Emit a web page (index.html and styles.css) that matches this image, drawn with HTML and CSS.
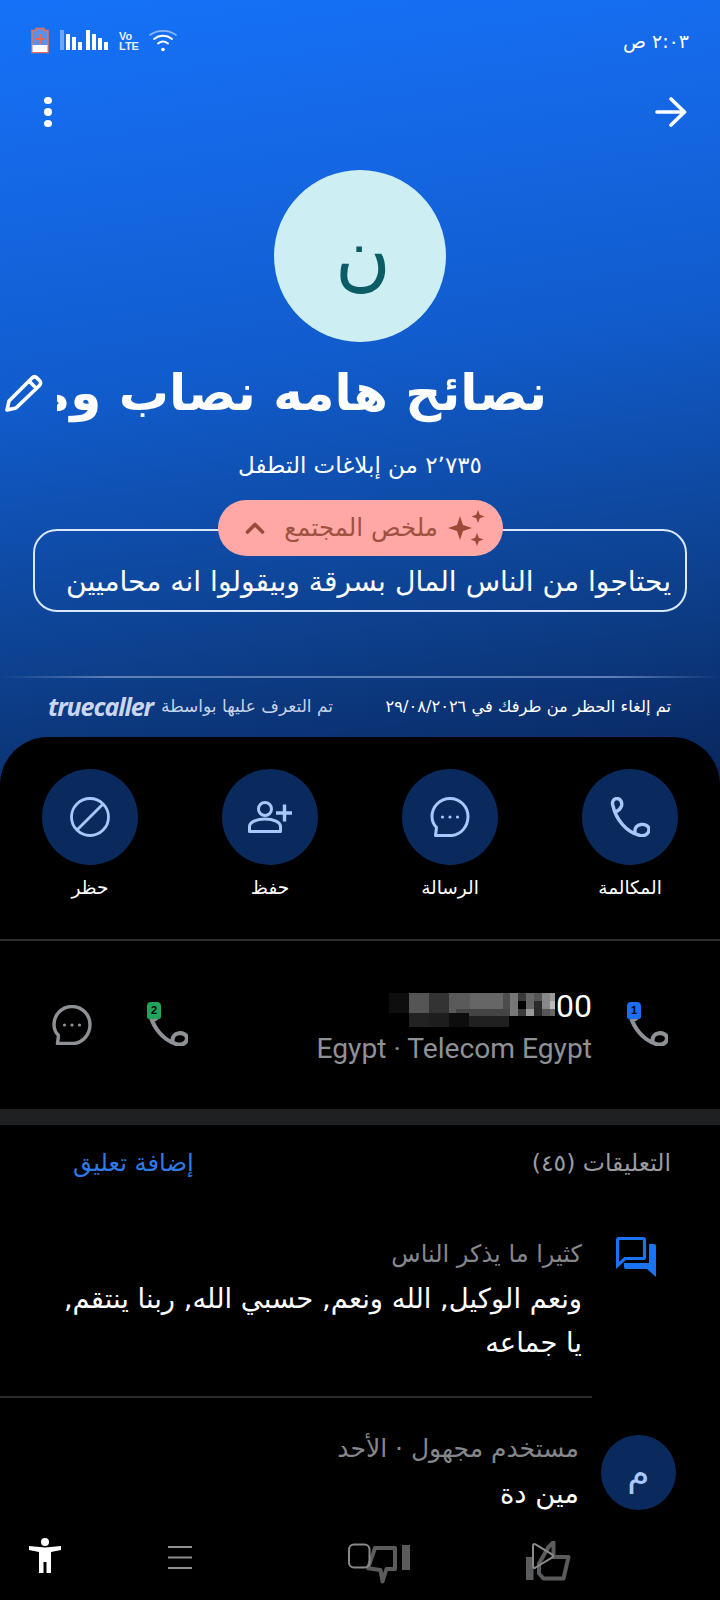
FILE: index.html
```html
<!DOCTYPE html>
<html lang="ar" dir="rtl">
<head>
    <meta charset="UTF-8">
    <meta name="viewport" content="width=device-width, initial-scale=1.0">
    <title>نصائح هامه نصاب</title>
    <link rel="stylesheet" href="styles.css">
</head>
<body>
    <div class="hero">
        <div class="status">
            <span class="time">٢:٠٣ ص</span>
            <div class="status-icons">
                <svg class="battery" width="18" height="27" viewBox="0 0 18 27">
                    <path d="M5 1.5h8v2h4v22H1v-22h4z" fill="#5b8fe8" stroke="#e2725b" stroke-width="1.6"/>
                    <rect x="1.5" y="18" width="15" height="7" fill="#fff"/>
                    <path d="M9 7v10M4.5 12h9" stroke="#f0664a" stroke-width="2"/>
                </svg>
                <svg class="signal" width="48" height="20" viewBox="0 0 48 20">
                    <rect x="0" y="0" width="4" height="20" fill="#6fa6fa"/>
                    <rect x="6" y="4" width="4" height="16" fill="#fff"/>
                    <rect x="12" y="7" width="4" height="13" fill="#fff"/>
                    <rect x="18" y="12" width="4" height="8" fill="#fff"/>
                    <rect x="26" y="0" width="4" height="20" fill="#fff"/>
                    <rect x="32" y="4" width="4" height="16" fill="#fff"/>
                    <rect x="38" y="8" width="4" height="12" fill="#fff"/>
                    <rect x="44" y="12" width="4" height="8" fill="#fff"/>
                </svg>
                <div class="volte"><span>Vo</span><span>LTE</span></div>
                <svg class="wifi" width="28" height="23" viewBox="0 0 28 23" fill="none" stroke-linecap="round">
                    <path d="M1 6C8.500 .5 19.500 .5 27 6" stroke="#8ab6fa" stroke-width="1.6"/>
                    <path d="M5 10c5.500-4.200 12.500-4.200 18 0" stroke="#fff" stroke-width="2"/>
                    <path d="M9 14.500c3-2.400 7-2.400 10 0" stroke="#fff" stroke-width="2"/>
                    <circle cx="14" cy="20.500" r="1.800" fill="#fff"/>
                </svg>
            </div>
        </div>

        <div class="toolbar">
            <svg width="32" height="30" viewBox="0 0 32 30" fill="none" stroke="#fff" stroke-width="3.6" stroke-linecap="round" stroke-linejoin="round">
                <path d="M2 15h27M16 2l13.500 13L16 28"/>
            </svg>
            <div class="dots"><i></i><i></i><i></i></div>
        </div>

        <div class="avatar">ن</div>

        <div class="name-row">
            <h1 class="name">نصائح هامه نصاب ومحتال</h1>
            <svg class="pencil" width="38" height="38" viewBox="0 0 38 38" fill="none" stroke="#fff" stroke-width="3.6" stroke-linejoin="round">
                <path d="M2 36l2-9L27 4c1.500-1.500 3.500-1.500 5 0l2.500 2.500c1.500 1.500 1.500 3.500 0 5L11 34z"/>
                <path d="M24 7l7.500 7.500"/>
            </svg>
        </div>

        <p class="reports">٢٬٧٣٥ من إبلاغات التطفل</p>

        <div class="summary">
            <div class="summary-pill">
                <svg width="38" height="36" viewBox="0 0 38 36" fill="#9c4a38">
                    <path d="M12 6l3 9 9 3-9 3-3 9-3-9-9-3 9-3z"/>
                    <path d="M30 0l1.800 4.700 4.700 1.800-4.700 1.800L30 13l-1.800-4.700-4.700-1.800 4.700-1.800z"/>
                    <path d="M29 23l1.800 4.700 4.700 1.800-4.700 1.800L29 36l-1.800-4.700-4.700-1.800 4.700-1.800z"/>
                </svg>
                <span>ملخص المجتمع</span>
                <svg width="20" height="12" viewBox="0 0 20 12" fill="none" stroke="#9c4a38" stroke-width="3.6" stroke-linecap="round" stroke-linejoin="round">
                    <path d="M2.500 10L10 2.500 17.500 10"/>
                </svg>
            </div>
            <p class="summary-text">يحتاجوا من الناس المال بسرقة وبيقولوا انه محاميين</p>
        </div>

        <div class="hero-line"></div>

        <div class="hero-foot">
            <span class="unblocked">تم إلغاء الحظر من طرفك في ٢٩/٠٨/٢٠٢٦</span>
            <span class="found-by">تم التعرف عليها بواسطة <b class="logo" dir="ltr">truecaller</b></span>
        </div>
    </div>

    <div class="sheet">
        <div class="actions">
            <div class="action">
                <div class="action-icon">
                    <svg width="40" height="40" viewBox="0 0 40 40" fill="none" stroke="#a8c7fa" stroke-width="3.4" stroke-linejoin="round" stroke-linecap="round">
                        <path d="M5.500 15C8 14 10.500 12 11.500 9 12.500 5.500 10.500 1.500 7 1.500 3.500 1.500 1.500 5 3 9 6 22 16 35 30 38.500c5 1 9-2 9-6 0-3.500-4-5.500-8-5-4 .5-6.500 3.500-6 7.500"/>
                    </svg>
                </div>
                <span>المكالمة</span>
            </div>
            <div class="action">
                <div class="action-icon">
                    <svg width="40" height="40" viewBox="0 0 40 40" fill="none" stroke="#a8c7fa" stroke-width="3" stroke-linejoin="round">
                        <path d="M20 1.500C10 1.500 2 9.500 2 19.500c0 4.500 1.500 8 4.500 11L5.500 38.500H22c9-1 16-9 16-19C38 9.500 30 1.500 20 1.500z"/>
                        <circle cx="12.500" cy="20" r="1.600" fill="#a8c7fa" stroke="none"/>
                        <circle cx="20" cy="20" r="1.600" fill="#a8c7fa" stroke="none"/>
                        <circle cx="27.500" cy="20" r="1.600" fill="#a8c7fa" stroke="none"/>
                    </svg>
                </div>
                <span>الرسالة</span>
            </div>
            <div class="action">
                <div class="action-icon">
                    <svg width="44" height="32" viewBox="0 0 44 32" fill="none" stroke="#a8c7fa" stroke-width="3" stroke-linejoin="round">
                        <circle cx="17" cy="8" r="6.500"/>
                        <path d="M1.500 30.500v-5c0-4.500 7-7.500 15.500-7.500s15.500 3 15.500 7.500v5z"/>
                        <path d="M36.500 3.500v17M28 12h16" stroke-width="3.400"/>
                    </svg>
                </div>
                <span>حفظ</span>
            </div>
            <div class="action">
                <div class="action-icon">
                    <svg width="40" height="40" viewBox="0 0 40 40" fill="none" stroke="#a8c7fa" stroke-width="2.800">
                        <circle cx="20" cy="20" r="18.500"/>
                        <path d="M7 33L33 7"/>
                    </svg>
                </div>
                <span>حظر</span>
            </div>
        </div>

        <div class="number-row">
            <div class="sim-call">
                <svg width="41" height="41" viewBox="0 0 40 40" fill="none" stroke="#8e9196" stroke-width="4" stroke-linejoin="round" stroke-linecap="round">
                    <path d="M5.500 15C8 14 10.500 12 11.500 9 12.500 5.500 10.500 1.500 7 1.500 3.500 1.500 1.500 5 3 9 6 22 16 35 30 38.500c5 1 9-2 9-6 0-3.500-4-5.500-8-5-4 .5-6.500 3.500-6 7.500"/>
                </svg>
                <span class="sim sim-one">1</span>
            </div>
            <div class="number-info">
                <div class="number" dir="ltr">
                    <svg class="blur" width="170" height="34" viewBox="0 0 170 34">
                        <rect x="0" y="0" width="20" height="20" fill="#0e0e0e"/>
                        <rect x="20" y="0" width="20" height="20" fill="#555"/>
                        <rect x="40" y="0" width="20" height="20" fill="#333"/>
                        <rect x="60" y="0" width="21" height="20" fill="#5a5a5a"/>
                        <rect x="81" y="0" width="33" height="16" fill="#666"/>
                        <rect x="114" y="0" width="7" height="16" fill="#4d4d4d"/>
                        <rect x="67" y="16" width="54" height="7" fill="#444"/>
                        <rect x="20" y="20" width="20" height="14" fill="#222"/>
                        <rect x="40" y="20" width="20" height="14" fill="#1d1d1d"/>
                        <rect x="60" y="20" width="20" height="14" fill="#0d0d0d"/>
                        <rect x="80" y="23" width="40" height="11" fill="#202020"/>
                        <rect x="121" y="0" width="8" height="23" fill="#777"/>
                        <rect x="129" y="0" width="8" height="8" fill="#3a3a3a"/>
                        <rect x="129" y="8" width="8" height="8" fill="#000"/>
                        <rect x="129" y="16" width="8" height="7" fill="#3a3a3a"/>
                        <rect x="137" y="0" width="8" height="16" fill="#666"/>
                        <rect x="137" y="16" width="8" height="7" fill="#999"/>
                        <rect x="145" y="0" width="8" height="8" fill="#555"/>
                        <rect x="145" y="8" width="8" height="15" fill="#2a2a2a"/>
                        <rect x="153" y="0" width="8" height="16" fill="#888"/>
                        <rect x="153" y="16" width="8" height="7" fill="#555"/>
                        <rect x="161" y="0" width="5" height="8" fill="#999"/>
                        <rect x="161" y="8" width="5" height="8" fill="#bbb"/>
                        <rect x="161" y="16" width="5" height="7" fill="#666"/>
                    </svg>
                    <span>00</span>
                </div>
                <div class="carrier" dir="ltr">Egypt · Telecom Egypt</div>
            </div>
            <div class="sim-call">
                <svg width="41" height="41" viewBox="0 0 40 40" fill="none" stroke="#8e9196" stroke-width="4" stroke-linejoin="round" stroke-linecap="round">
                    <path d="M5.500 15C8 14 10.500 12 11.500 9 12.500 5.500 10.500 1.500 7 1.500 3.500 1.500 1.500 5 3 9 6 22 16 35 30 38.500c5 1 9-2 9-6 0-3.500-4-5.500-8-5-4 .5-6.500 3.500-6 7.500"/>
                </svg>
                <span class="sim sim-two">2</span>
            </div>
            <svg class="number-msg" width="40" height="40" viewBox="0 0 40 40" fill="none" stroke="#8e9196" stroke-width="3.400" stroke-linejoin="round">
                <path d="M20 1.500C10 1.500 2 9.500 2 19.500c0 4.500 1.500 8 4.500 11L5.500 38.500H22c9-1 16-9 16-19C38 9.500 30 1.500 20 1.500z"/>
                <circle cx="12.500" cy="20" r="1.600" fill="#8e9196" stroke="none"/>
                <circle cx="20" cy="20" r="1.600" fill="#8e9196" stroke="none"/>
                <circle cx="27.500" cy="20" r="1.600" fill="#8e9196" stroke="none"/>
            </svg>
        </div>

        <div class="band"></div>

        <div class="comments">
            <div class="comments-head">
                <span>التعليقات (٤٥)</span>
                <a class="add-comment">إضافة تعليق</a>
            </div>

            <div class="top-comment">
                <svg class="forum" width="40" height="40" viewBox="0 0 40 40" fill="none">
                    <path d="M3 1.500h24A1.500 1.500 0 0 1 28.500 3v17a1.500 1.500 0 0 1-1.500 1.500H9l-7.500 7V3A1.500 1.500 0 0 1 3 1.500z" stroke="#1a73f0" stroke-width="3.200"/>
                    <path d="M33 7h5a2 2 0 0 1 2 2v31l-9-8H10a2 2 0 0 1-2-2v-4h25z" fill="#1a73f0"/>
                </svg>
                <div class="comment-body">
                    <div class="comment-meta">كثيرا ما يذكر الناس</div>
                    <p class="comment-text">ونعم الوكيل, الله ونعم, حسبي الله, ربنا ينتقم,<br>يا جماعه</p>
                </div>
            </div>

            <div class="comment-line"></div>

            <div class="comment">
                <div class="comment-avatar">م</div>
                <div class="comment-body">
                    <div class="comment-meta">مستخدم مجهول · الأحد</div>
                    <p class="comment-text">مين دة</p>
                </div>
            </div>
        </div>

        <div class="nav" dir="ltr">
            <svg class="nav-person" width="32" height="36" viewBox="0 0 32 36" fill="#fff">
                <circle cx="16" cy="4" r="4"/>
                <path d="M0 8l16 1.500L32 8v4l-10 2v21h-4.500V24h-3v11H10V14L0 12z"/>
            </svg>
            <svg class="nav-menu" width="24" height="23" viewBox="0 0 24 23" stroke="#909090" stroke-width="2">
                <path d="M0 1h24M0 11.500h24M0 22h24"/>
            </svg>
            <svg class="nav-dislike" width="62" height="42" viewBox="0 0 62 42" fill="none">
                <path d="M27 5h20v21h-8.500l-4 12.500-2-11.500-12.500-1.700z" stroke="#5a5b5d" stroke-width="4" stroke-linejoin="round"/>
                <rect x="54" y="2" width="8" height="25" fill="#5a5b5d"/>
                <rect x="1" y="1.500" width="20.500" height="23" rx="5" stroke="#8a8a8a" stroke-width="2"/>
            </svg>
            <svg class="nav-like" width="46" height="41" viewBox="0 0 46 41" fill="none">
                <rect x="0" y="16" width="7.500" height="23" fill="#5a5b5d"/>
                <path d="M13 22.500L22.500 6 27.500 1v15h15l-5 21.500h-20l-4.500-5z" stroke="#5a5b5d" stroke-width="4" stroke-linejoin="round"/>
                <path d="M7 4.500c0-1.500 1-2 2.500-1.200l16.500 10c1.500 1 1.500 2.400 0 3.400L9.500 26.500C8 27.300 7 26.800 7 25.300z" stroke="#8a8a8a" stroke-width="2"/>
            </svg>
        </div>
    </div>
</body>
</html>
```

FILE: styles.css
```css
html, body {
    margin: 0;
    height: 1600px;
    overflow: hidden;
}
body {
    width: 720px;
    display: flex;
    flex-direction: column;
    background: #000 linear-gradient(172deg, #1572f8 0%, #1569e8 18%, #115ccd 45%, #0d418f 75%, #09255a 100%) no-repeat;
    background-size: 720px 790px;
    font-family: "DejaVu Sans", "Noto Sans", sans-serif;
    color: #fff;
}
p, h1 {
    margin: 0;
}

/* top blue part */
.hero {
    height: 737px;
    flex: none;
}
.status {
    height: 60px;
    display: flex;
    justify-content: space-between;
    padding: 0 31px 0 31px;
}
.time {
    font-size: 19px;
    line-height: 24px;
    margin-top: 29px;
}
.status-icons {
    display: flex;
    direction: ltr;
    align-items: flex-start;
    padding-top: 27px;
}
.signal {
    margin: 3px 0 0 11px;
}
.volte {
    display: flex;
    flex-direction: column;
    width: 22px;
    margin: 4px 0 0 11px;
    font: bold 11px/10px "Liberation Sans", sans-serif;
    color: #e8f0ff;
}
.wifi {
    margin: 2px 0 0 8px;
}
.toolbar {
    height: 30px;
    margin-top: 37px;
    padding: 0 33px 0 44px;
    display: flex;
    justify-content: space-between;
}
.dots {
    display: flex;
    flex-direction: column;
    gap: 4px;
}
.dots i {
    display: block;
    width: 8px;
    height: 8px;
    border-radius: 50%;
    background: #fff;
}
.avatar {
    width: 172px;
    height: 172px;
    box-sizing: border-box;
    margin: 43px auto 0;
    padding-left: 6px;
    border-radius: 50%;
    background: #cdeef2;
    color: #0c5c66;
    font-size: 76px;
    line-height: 172px;
    text-align: center;
}
.name-row {
    display: flex;
    align-items: center;
    height: 60px;
    margin-top: 21px;
    padding: 0 173px 0 5px;
}
.name {
    flex: 1;
    overflow: hidden;
    white-space: nowrap;
    font-size: 50px;
    line-height: 60px;
    font-weight: bold;
}
.pencil {
    flex: none;
    margin-right: 14px;
}
.reports {
    margin-top: 27px;
    font-size: 23px;
    line-height: 30px;
    text-align: center;
}
.summary {
    position: relative;
    height: 83px;
    box-sizing: border-box;
    margin: 49px 33px 0;
    padding: 33px 14px 0;
    border: 2px solid #dbe8fb;
    border-radius: 24px;
}
.summary-pill {
    position: absolute;
    top: -31px;
    left: 183px;
    width: 285px;
    height: 56px;
    box-sizing: border-box;
    padding: 0 17px 0 0;
    border-radius: 28px;
    background: #ffa8a6;
    color: #a0503f;
    display: flex;
    align-items: center;
    gap: 10px;
    font-size: 24.5px;
}
.summary-pill span {
    line-height: 30px;
}
.summary-pill svg:last-child {
    margin-right: 9px;
}
.summary-text {
    font-size: 28.2px;
    line-height: 36px;
    white-space: nowrap;
}
.hero-line {
    height: 2px;
    margin-top: 64px;
    background: linear-gradient(90deg, transparent, #5f7fb5 15%, #5f7fb5 85%, transparent);
}
.hero-foot {
    display: flex;
    justify-content: space-between;
    align-items: center;
    height: 30px;
    margin-top: 13px;
    padding: 0 49px 0 48px;
    font-size: 17px;
}
.unblocked {
    font-size: 16.3px;
}
.found-by {
    color: #c5d2ea;
    display: flex;
    align-items: center;
    gap: 8px;
}
.logo {
    font: italic bold 25px/30px "Open Sans", sans-serif;
    letter-spacing: -1.1px;
    color: #c9d6ee;
}

/* black sheet */
.sheet {
    flex: 1;
    display: flex;
    flex-direction: column;
    min-height: 0;
    background: #000;
    border-radius: 48px 48px 0 0;
}
.actions {
    display: grid;
    grid-template-columns: repeat(4, 1fr);
    padding: 32px 0 37px;
    border-bottom: 2px solid #2c2d2f;
}
.action {
    display: flex;
    flex-direction: column;
    align-items: center;
    gap: 9px;
    font-size: 18.5px;
    line-height: 28px;
}
.action-icon {
    width: 96px;
    height: 96px;
    border-radius: 50%;
    background: #0a2a5e;
    display: flex;
    align-items: center;
    justify-content: center;
}
.number-row {
    height: 168px;
    flex: none;
    display: flex;
    align-items: center;
    padding: 0 52px;
}
.sim-call {
    position: relative;
    width: 41px;
    height: 41px;
    flex: none;
}
.sim {
    position: absolute;
    top: -3px;
    left: 0;
    width: 14px;
    height: 17px;
    border-radius: 4px 4px 2px 2px;
    color: #000;
    font: bold 11px/17px "Liberation Sans", sans-serif;
    text-align: center;
}
.sim-one {
    background: #1a6ff0;
}
.sim-two {
    background: #22a35a;
}
.number-info {
    flex: 1;
    margin: 3px 35px 0 0;
    direction: ltr;
    text-align: right;
}
.number {
    display: flex;
    justify-content: flex-end;
    align-items: flex-start;
    height: 45px;
    font: 32px/38px Roboto, sans-serif;
}
.blur {
    margin-top: 6px;
    margin-right: -3px;
}
.carrier {
    font: 28.2px/34px Roboto, sans-serif;
    color: #8e9196;
}
.number-msg {
    margin-right: 55px;
    flex: none;
}
.band {
    height: 16px;
    flex: none;
    background: #1e2022;
}
.comments {
    flex: 1;
    min-height: 0;
    overflow: hidden;
}
.comments-head {
    display: flex;
    justify-content: space-between;
    padding: 23px 49px 0 73px;
    font-size: 23.5px;
    line-height: 30px;
    color: #9a9ca0;
}
.add-comment {
    font-size: 24.2px;
    color: #2f7ae5;
}
.top-comment {
    display: flex;
    margin-top: 59px;
    padding-right: 64px;
    gap: 34px;
}
.forum {
    flex: none;
}
.comment-meta {
    font-size: 24px;
    line-height: 34px;
    color: #85878b;
}
.comment .comment-meta {
    font-size: 25px;
}
.comment-text {
    margin-top: 6px;
    font-size: 27.4px;
    line-height: 44px;
    white-space: nowrap;
}
.comment-line {
    width: 592px;
    height: 2px;
    margin: 31px 128px 0 0;
    background: #2c2d2f;
}
.comment {
    display: flex;
    gap: 22px;
    padding: 34px 44px 0 0;
}
.comment-avatar {
    width: 75px;
    height: 75px;
    flex: none;
    margin-top: 3px;
    border-radius: 50%;
    background: #0a2a5e;
    color: #a8c7fa;
    font-size: 36px;
    line-height: 75px;
    text-align: center;
}
.nav {
    height: 70px;
    flex: none;
    display: flex;
    align-items: flex-start;
    background: #000;
}
.nav-person {
    margin: 8px 0 0 29px;
}
.nav-menu {
    margin: 16px 0 0 107px;
}
.nav-dislike {
    margin: 13px 0 0 156px;
}
.nav-like {
    margin: 11px 0 0 116px;
}
```
